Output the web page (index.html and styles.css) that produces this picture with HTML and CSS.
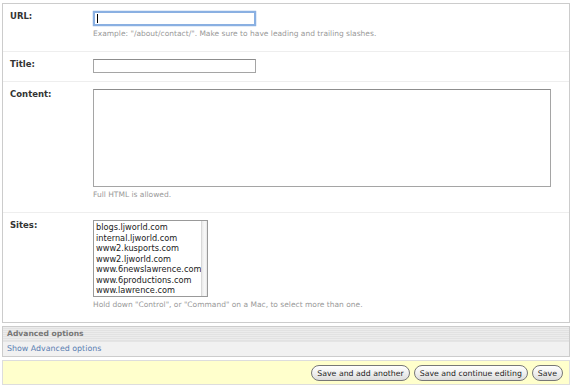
FILE: index.html
```html
<!DOCTYPE html>
<html lang="en">
<head>
    <meta charset="UTF-8">
    <title>Add flat page | Django site admin</title>
    <link rel="stylesheet" href="styles.css">
</head>
<body>
    <div class="content">
        <form>
            <fieldset class="module">
                <div class="form-row">
                    <label class="required">URL:</label>
                    <div class="field">
                        <span class="input-wrap">
                            <input type="text" class="vTextField focused">
                            <span class="caret"></span>
                        </span>
                        <p class="help">Example: "/about/contact/". Make sure to have leading and trailing slashes.</p>
                    </div>
                </div>
                <div class="form-row">
                    <label class="required">Title:</label>
                    <div class="field">
                        <input type="text" class="vTextField">
                    </div>
                </div>
                <div class="form-row">
                    <label class="required">Content:</label>
                    <div class="field">
                        <textarea class="vLargeTextField"></textarea>
                        <p class="help">Full HTML is allowed.</p>
                    </div>
                </div>
                <div class="form-row last">
                    <label class="required">Sites:</label>
                    <div class="field">
                        <div class="select-multiple">
                            <ul class="options">
                                <li>blogs.ljworld.com</li>
                                <li>internal.ljworld.com</li>
                                <li>www2.kusports.com</li>
                                <li>www2.ljworld.com</li>
                                <li>www.6newslawrence.com</li>
                                <li>www.6productions.com</li>
                                <li>www.lawrence.com</li>
                            </ul>
                            <div class="scroll-track"></div>
                        </div>
                        <p class="help">Hold down "Control", or "Command" on a Mac, to select more than one.</p>
                    </div>
                </div>
            </fieldset>

            <fieldset class="module collapse">
                <h2>Advanced options</h2>
                <a href="#" class="collapse-toggle">Show Advanced options</a>
            </fieldset>

            <div class="submit-row">
                <button type="button">Save and add another</button>
                <button type="button">Save and continue editing</button>
                <button type="button">Save</button>
            </div>
        </form>
    </div>
</body>
</html>
```

FILE: styles.css
```css
* {
    box-sizing: border-box;
    margin: 0;
    padding: 0;
}

body {
    font-family: "DejaVu Sans", Verdana, sans-serif;
    font-size: 11px;
    color: #333;
    background: #fff;
}

.content {
    padding: 3px 4px 0 2px;
}

fieldset {
    border: none;
}

.module {
    border: 1px solid #ccc;
    background: #fff;
}

.form-row {
    display: flex;
    padding: 7px 8px 8px 7px;
    border-bottom: 1px solid #eee;
}

.form-row.last {
    border-bottom: none;
}

.form-row label {
    width: 83px;
    flex-shrink: 0;
    font-size: 8.5px;
    line-height: 10px;
    font-weight: bold;
    color: #333;
}

.field {
    flex: 1;
}

.input-wrap {
    position: relative;
    display: block;
    width: 163px;
}

.caret {
    position: absolute;
    left: 4px;
    top: 3px;
    width: 1px;
    height: 9px;
    background: #000;
}

.vTextField {
    display: block;
    width: 163px;
    height: 14px;
    border: 1px solid #a5a5a5;
    border-top-color: #8d8d8d;
    font-family: inherit;
    font-size: 9px;
    outline: none;
}

.vTextField.focused {
    border: 2px solid #8ab0e2;
    box-shadow: 0 0 1px #5d8fd4;
    height: 15px;
}

.vLargeTextField {
    display: block;
    width: 458px;
    height: 98px;
    border: 1px solid #a5a5a5;
    border-top-color: #8d8d8d;
    resize: none;
}

.help {
    margin-top: 3px;
    padding-bottom: 4px;
    font-size: 7.5px;
    line-height: 10px;
    color: #999;
}

.select-multiple {
    display: flex;
    width: 115px;
    height: 77px;
    border: 1px solid #999;
    overflow: hidden;
}

.options {
    list-style: none;
    flex: 1;
    padding: 1px 0 0 2px;
    font-size: 8.2px;
    line-height: 10.5px;
    color: #222;
    white-space: nowrap;
}

.scroll-track {
    width: 9px;
    border-left: 1px solid #d8d8d8;
    background: linear-gradient(to right, #e9e9e9, #fafafa 60%, #e4e4e4);
}

.collapse {
    margin-top: 3px;
    background: #f1f1f1;
}

.collapse h2 {
    height: 15px;
    padding: 0 4px;
    font-size: 7.6px;
    line-height: 14px;
    color: #777;
    background: repeating-linear-gradient(to bottom, #ececec 0, #ececec 1px, #e2e2e2 1px, #e2e2e2 2px);
    border-bottom: 1px solid #e4e4e4;
}

.collapse-toggle {
    display: block;
    height: 14px;
    padding: 0 4px;
    font-size: 7.9px;
    line-height: 13px;
    color: #5b80b2;
    text-decoration: none;
}

.submit-row {
    display: flex;
    justify-content: flex-end;
    gap: 4px;
    margin-top: 3px;
    padding: 4px 6px 3px;
    background: #ffffcc;
    border: 1px solid #ddd;
}

.submit-row button {
    height: 16px;
    padding: 0 5px;
    font-family: inherit;
    font-size: 7.8px;
    color: #222;
    border: 1px solid #777;
    border-radius: 8px;
    background: linear-gradient(to bottom, #ffffff, #f0f0f0 50%, #dcdcdc);
}
```
